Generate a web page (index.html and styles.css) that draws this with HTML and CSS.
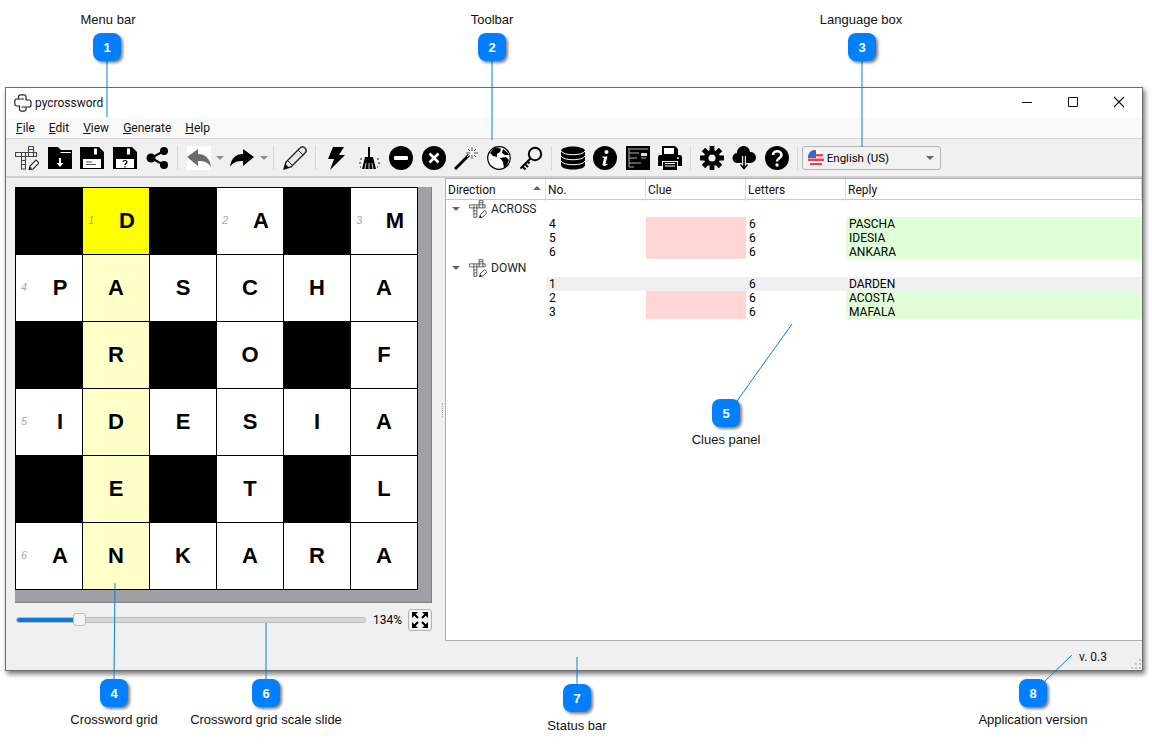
FILE: index.html
```html
<!DOCTYPE html>
<html lang="en">
<head>
    <meta charset="UTF-8">
    <meta name="viewport" content="width=device-width, initial-scale=1.0">
    <title>pycrossword</title>
    <link rel="stylesheet" href="styles.css">
</head>
<body>
    <svg width="0" height="0" class="defs">
        <symbol id="crossIcon" viewBox="1 0 24 24">
            <path d="M1.500 6.500h21v4h-21zM7.500 6.500v17M11.500 6.500v17M7.500 14.500h4M7.500 18.500h4M7.500 23h4M14.500 .5v10M19.500 .5v10M14.500 .5h5M14.500 3.500h5" fill="none" stroke="#444" stroke-width="1.100"/>
            <path d="M15 24l1-4 6-6 3 3-6 6z" fill="#fff" stroke="#222" stroke-width="1.100"/>
            <path d="M15 24l1-3 2 1z" fill="#000"/>
        </symbol>
    </svg>

    <div class="window">
        <div class="titlebar">
            <svg class="app-icon" width="18" height="18" viewBox="0 0 18 18"><path d="M6.500 .8h3.500a2 2 0 0 1 2 2V6h3a2 2 0 0 1 2 2v3a2 2 0 0 1-2 2h-3v2.200a2 2 0 0 1-2 2H7.500a2 2 0 0 1-2-2V12H2.800a2 2 0 0 1-2-2V7a2 2 0 0 1 2-2h1.700V2.800a2 2 0 0 1 2-2zM4.500 5H10M7.500 13H13" fill="none" stroke="#222" stroke-width="1.200"/></svg>
            <span class="app-name">pycrossword</span>
            <div class="win-btns">
                <svg width="46" height="30" viewBox="0 0 46 30"><path d="M18 14.500h10" stroke="#111"/></svg>
                <svg width="46" height="30" viewBox="0 0 46 30"><path d="M18.500 9.500h9v9h-9z" fill="none" stroke="#111"/></svg>
                <svg width="46" height="30" viewBox="0 0 46 30"><path d="M18 9l10 10M28 9L18 19" stroke="#111" stroke-width="1.100"/></svg>
            </div>
        </div>

        <div class="menubar">
            <span class="menu-item"><u>F</u>ile</span>
            <span class="menu-item"><u>E</u>dit</span>
            <span class="menu-item"><u>V</u>iew</span>
            <span class="menu-item"><u>G</u>enerate</span>
            <span class="menu-item"><u>H</u>elp</span>
        </div>

        <div class="toolbar">
            <span class="tool"><svg width="24" height="24"><use href="#crossIcon"/></svg></span>
            <span class="tool"><svg width="24" height="24" viewBox="0 0 24 24"><path d="M0 1h10l3 3h11v19H0z" fill="#000"/><path d="M12.500 6.500H23" stroke="#fff"/><path d="M11 12h2v5h2.500L12 21l-3.500-4H11z" fill="#fff"/></svg></span>
            <span class="tool"><svg width="24" height="24" viewBox="0 0 24 24"><path d="M0 1h19l5 5v17H0z" fill="#000"/><path d="M14 2.500h3v6h-3zM3 13h18v9H3z" fill="#fff"/><path d="M6 15.500h6v1H6zM6 18h10v1H6z" fill="#555"/></svg></span>
            <span class="tool"><svg width="24" height="24" viewBox="0 0 24 24"><path d="M0 1h19l5 5v17H0z" fill="#000"/><path d="M14 2.500h3v6h-3zM3 13h18v9H3z" fill="#fff"/><path d="M10 16c0-2 4-2 4 0 0 1.500-2 1.500-2 3M12 20v1.500" fill="none" stroke="#000" stroke-width="1.200"/></svg></span>
            <span class="tool"><svg width="24" height="24" viewBox="0 0 24 24"><path d="M19 5L6 12l13 7" fill="none" stroke="#000" stroke-width="2"/><circle cx="19" cy="5" r="4"/><circle cx="6" cy="12" r="4.500"/><circle cx="19" cy="19" r="4"/></svg></span>
            <span class="sep"></span>
            <span class="tool tool-off"><svg width="24" height="24" viewBox="0 0 24 24"><path d="M0 11L11 3v5c7 0 12 4 13 13-3-5-7-6-13-6v5z" fill="#6b6b6b"/></svg></span>
            <span class="drop"></span>
            <span class="tool"><svg width="24" height="24" viewBox="0 0 24 24"><path d="M24 11L13 3v5C6 8 1 12 0 21c3-5 7-6 13-6v5z" fill="#000"/></svg></span>
            <span class="drop"></span>
            <span class="sep"></span>
            <span class="tool"><svg width="24" height="24" viewBox="0 0 24 24"><path d="M1 23l2-7L17 2c2-2 4-1 5 0s2 3 0 5L8 21z" fill="#e8e8e8" stroke="#222" stroke-width="1.400"/><path d="M1 23l1.500-5 3.500 3.500z" fill="#000"/><path d="M15 4l5 5M5 15l4 4" stroke="#222"/></svg></span>
            <span class="sep"></span>
            <span class="tool"><svg width="24" height="24" viewBox="0 0 24 24"><path d="M9 1h11l-5 8h6L6 24l4-11H4z" fill="#000"/></svg></span>
            <span class="tool"><svg width="24" height="24" viewBox="0 0 24 24"><path d="M11 1h2v10h-2z" fill="#000"/><path d="M8 11h8l3 12H5z" fill="#000"/><path d="M9 17l-1 6M12 17v6M15 17l1 6" stroke="#fff" stroke-width=".8"/><path d="M3 13h2M2 17h2M3 21h1M20 13h2M21 17h2M20 21h1" stroke="#222"/></svg></span>
            <span class="tool"><svg width="24" height="24" viewBox="0 0 24 24"><circle cx="12" cy="12" r="12"/><rect x="5" y="10" width="14" height="4" rx="1" fill="#fff"/></svg></span>
            <span class="tool"><svg width="24" height="24" viewBox="0 0 24 24"><circle cx="12" cy="12" r="12"/><path d="M7.500 7.500l9 9M16.500 7.500l-9 9" stroke="#fff" stroke-width="2.600"/></svg></span>
            <span class="tool"><svg width="24" height="24" viewBox="0 0 24 24"><path d="M1 23L15 9" stroke="#000" stroke-width="3"/><path d="M13 11l2-2" stroke="#fff"/><path d="M18 1v4M18 9v4M12 7h4M20 7h4M14 3l2 2M20 9l2 2M22 3l-2 2" stroke="#555"/></svg></span>
            <span class="tool"><svg width="24" height="24" viewBox="0 0 24 24"><circle cx="12" cy="12" r="11.300" fill="#fff" stroke="#000" stroke-width="1.200"/><path d="M6 3c3-2 6-1 8 0l-1 3-3 2v3l-4-1-3-3zM13 12l6-1 3 3-2 5-3 3-1-6zM16 3l4 3 2 3-4 0-3-2z" fill="#000"/></svg></span>
            <span class="tool"><svg width="24" height="24" viewBox="0 0 24 24"><circle cx="16" cy="8" r="6.200" fill="none" stroke="#000" stroke-width="2"/><path d="M11.500 12.500L1.500 22.500M3.500 20.500l3 3M6 18l3 3M8.500 15.500l2 2" fill="none" stroke="#000" stroke-width="2"/></svg></span>
            <span class="sep"></span>
            <span class="tool"><svg width="24" height="24" viewBox="0 0 24 24"><path d="M0 5c0-6 24-6 24 0v14c0 6-24 6-24 0z" fill="#000"/><path d="M0 5c2 5 22 5 24 0M0 10c2 5 22 5 24 0M0 15c2 5 22 5 24 0" fill="none" stroke="#fff" stroke-width="1"/></svg></span>
            <span class="tool"><svg width="24" height="24" viewBox="0 0 24 24"><circle cx="12" cy="12" r="12"/><circle cx="13.500" cy="6" r="2" fill="#fff"/><path d="M9.500 10.500h5l-2 7c0 1 1 1 2.500 0-1 2.500-5 3.500-5.500 1l1.500-6.500-1.500-.5z" fill="#fff"/></svg></span>
            <span class="tool"><svg width="24" height="24" viewBox="0 0 24 24"><path d="M0 0h24v24H0z" fill="#000"/><path d="M2 3h20M3 3v18M3 7h8M3 12h6M3 17h12M3 21h5M15 12h5M11 7h2M9 12h2" stroke="#ddd" fill="none" stroke-width=".8"/><path d="M15 7h6v3h-6z" fill="#ddd"/></svg></span>
            <span class="tool"><svg width="24" height="24" viewBox="0 0 24 24"><path d="M4 0h13l3 3v6H4z" fill="#000"/><path d="M6 2h10v6H6z" fill="#fff"/><path d="M2 9h20a2 2 0 0 1 2 2v9h-4v-5H4v5H0v-9a2 2 0 0 1 2-2z" fill="#000"/><circle cx="20" cy="12" r="1" fill="#fff"/><path d="M5 16h14v8H5z" fill="#000"/><path d="M7 17h10v1H7zM7 19.500h10v1H7z" fill="#fff"/></svg></span>
            <span class="sep"></span>
            <span class="tool"><svg width="24" height="24" viewBox="0 0 24 24"><path d="M12 5v-5M12 24v-5M5 12H0M24 12h-5M7 7L3.500 3.500M20.500 20.500L17 17M17 7l3.500-3.500M3.500 20.500L7 17" stroke="#000" stroke-width="4.800"/><circle cx="12" cy="12" r="8"/><circle cx="12" cy="12" r="3.500" fill="#f0f0f0"/></svg></span>
            <span class="tool"><svg width="24" height="24" viewBox="0 0 24 24"><path d="M6 17a5 5 0 0 1-1-10 6.500 6.500 0 0 1 13-1 5.500 5.500 0 0 1 1 11z" fill="#000"/><path d="M12 10v12M8 18l4 4.500 4-4.500" fill="none" stroke="#f0f0f0" stroke-width="4"/><path d="M12 10v12M8.500 18.500l3.500 4 3.500-4" fill="none" stroke="#000" stroke-width="1.600"/></svg></span>
            <span class="tool"><svg width="24" height="24" viewBox="0 0 24 24"><circle cx="12" cy="12" r="12"/><path d="M8 9c0-5 8.500-5 8.500 0 0 3.500-4.500 3-4.500 6.500" fill="none" stroke="#fff" stroke-width="2.600"/><circle cx="12" cy="19" r="1.700" fill="#fff"/></svg></span>
            <span class="sep"></span>
            <div class="combo">
                <svg class="flag" width="16" height="16" viewBox="0 0 16 16">
                    <circle cx="8" cy="8" r="8" fill="#fff"/>
                    <path d="M1 4h14v2.500H1zM0 8.500h16V11H0zM2 13h12v2H2z" fill="#e8434f"/>
                    <path d="M0 8V6a7 7 0 0 1 8-6v8z" fill="#3f66c4"/>
                </svg>
                <span class="combo-text">English (US)</span>
                <span class="combo-arrow"></span>
            </div>
        </div>

        <div class="main">
            <div class="left-panel">
                <div class="grid-area">
                    <div class="grid">
                        <div class="cell black"></div>
                        <div class="cell active numbered"><span class="num">1</span>D</div>
                        <div class="cell black"></div>
                        <div class="cell numbered"><span class="num">2</span>A</div>
                        <div class="cell black"></div>
                        <div class="cell numbered"><span class="num">3</span>M</div>

                        <div class="cell numbered"><span class="num">4</span>P</div>
                        <div class="cell word">A</div>
                        <div class="cell">S</div>
                        <div class="cell">C</div>
                        <div class="cell">H</div>
                        <div class="cell">A</div>

                        <div class="cell black"></div>
                        <div class="cell word">R</div>
                        <div class="cell black"></div>
                        <div class="cell">O</div>
                        <div class="cell black"></div>
                        <div class="cell">F</div>

                        <div class="cell numbered"><span class="num">5</span>I</div>
                        <div class="cell word">D</div>
                        <div class="cell">E</div>
                        <div class="cell">S</div>
                        <div class="cell">I</div>
                        <div class="cell">A</div>

                        <div class="cell black"></div>
                        <div class="cell word">E</div>
                        <div class="cell black"></div>
                        <div class="cell">T</div>
                        <div class="cell black"></div>
                        <div class="cell">L</div>

                        <div class="cell numbered"><span class="num">6</span>A</div>
                        <div class="cell word">N</div>
                        <div class="cell">K</div>
                        <div class="cell">A</div>
                        <div class="cell">R</div>
                        <div class="cell">A</div>
                    </div>
                </div>
                <div class="scale-row">
                    <div class="slider">
                        <div class="slider-fill"></div>
                        <div class="slider-handle"></div>
                    </div>
                    <span class="scale-value">134%</span>
                    <span class="fit-btn">
                        <svg width="16" height="16" viewBox="0 0 16 16"><path d="M0 0h6L0 6zM16 0v6L10 0zM0 16v-6l6 6zM16 16h-6l6-6z" fill="#000"/><path d="M2 2l4 4M14 2l-4 4M2 14l4-4M14 14l-4-4" stroke="#000" stroke-width="2"/></svg>
                    </span>
                </div>
            </div>

            <div class="splitter"><span class="grip"></span></div>

            <div class="clues">
                <div class="clues-row clues-head">
                    <div class="head-cell head-sort">Direction<span class="sort-arrow"></span></div>
                    <div class="head-cell">No.</div>
                    <div class="head-cell">Clue</div>
                    <div class="head-cell">Letters</div>
                    <div class="head-cell">Reply</div>
                </div>

                <div class="group group-across">
                    <span class="twisty"></span>
                    <svg class="group-icon" width="18" height="18"><use href="#crossIcon"/></svg>
                    <span>ACROSS</span>
                </div>
                <div class="clues-row">
                    <div></div><div class="col-text">4</div><div class="bad"></div><div class="col-text">6</div><div class="col-text good">PASCHA</div>
                </div>
                <div class="clues-row">
                    <div></div><div class="col-text">5</div><div class="bad"></div><div class="col-text">6</div><div class="col-text good">IDESIA</div>
                </div>
                <div class="clues-row">
                    <div></div><div class="col-text">6</div><div class="bad"></div><div class="col-text">6</div><div class="col-text good">ANKARA</div>
                </div>

                <div class="group group-down">
                    <span class="twisty"></span>
                    <svg class="group-icon" width="18" height="18"><use href="#crossIcon"/></svg>
                    <span>DOWN</span>
                </div>
                <div class="clues-row">
                    <div></div><div class="col-text shade">1</div><div class="shade"></div><div class="col-text shade">6</div><div class="col-text shade">DARDEN</div>
                </div>
                <div class="clues-row">
                    <div></div><div class="col-text">2</div><div class="bad"></div><div class="col-text">6</div><div class="col-text good">ACOSTA</div>
                </div>
                <div class="clues-row">
                    <div></div><div class="col-text">3</div><div class="bad"></div><div class="col-text">6</div><div class="col-text good">MAFALA</div>
                </div>
            </div>
        </div>

        <div class="statusbar">
            <span class="version">v. 0.3</span>
            <svg class="size-grip" width="12" height="12" viewBox="0 0 12 12"><path d="M9 1h2v2H9zM5 5h2v2H5zM9 5h2v2H9zM1 9h2v2H1zM5 9h2v2H5zM9 9h2v2H9z" fill="#c4c4c4"/></svg>
        </div>
    </div>

    <!-- callouts over the screenshot -->
    <svg class="leaders" width="1152" height="750" viewBox="0 0 1152 750">
        <path d="M107 61V117M492 61V140M862 61V147M114 679L115 583M737 401L792 324M266 679V623M577 684V657M1045 681L1072 655" fill="none" stroke="#0b7de0" stroke-width="1"/>
    </svg>

    <span class="label l1">Menu bar</span>
    <span class="label l2">Toolbar</span>
    <span class="label l3">Language box</span>
    <span class="label l4">Crossword grid</span>
    <span class="label l5">Clues panel</span>
    <span class="label l6">Crossword grid scale slide</span>
    <span class="label l7">Status bar</span>
    <span class="label l8">Application version</span>

    <span class="badge b1">1</span>
    <span class="badge b2">2</span>
    <span class="badge b3">3</span>
    <span class="badge b4">4</span>
    <span class="badge b5">5</span>
    <span class="badge b6">6</span>
    <span class="badge b7">7</span>
    <span class="badge b8">8</span>
</body>
</html>
```

FILE: styles.css
```css
html, body {
    margin: 0;
    padding: 0;
}

body {
    position: relative;
    width: 1152px;
    height: 750px;
    overflow: hidden;
    background-color: #fff;
    font-family: Roboto, sans-serif;
    font-size: 12px;
    color: #000;
}

.defs {
    position: absolute;
}

.window {
    box-sizing: border-box;
    width: 1138px;
    height: 584px;
    margin: 87px 0 0 5px;
    border: 1px solid #6e6e6e;
    background-color: #f0f0f0;
    box-shadow: 2px 3px 5px rgba(0, 0, 0, 0.55);
    display: flex;
    flex-direction: column;
}

.titlebar {
    height: 30px;
    background-color: #fff;
    display: flex;
    align-items: center;
    padding-left: 8px;
}

.app-icon {
    margin-right: 3px;
}

.app-name {
    font-size: 12px;
    color: #111;
}

.win-btns {
    margin-left: auto;
    display: flex;
}

.menubar {
    height: 20px;
    background-color: #f9f9f9;
    display: flex;
    align-items: center;
    padding-left: 10px;
    border-bottom: 1px solid #dadada;
}

.menu-item {
    margin-right: 14px;
    color: #111;
}

.toolbar {
    height: 37px;
    display: flex;
    align-items: center;
    padding-left: 4.75px;
    border-bottom: 2px solid #d0d0d0;
}

.tool {
    width: 32.5px;
    height: 26px;
    flex: none;
    display: flex;
    align-items: center;
    justify-content: center;
}

.tool-off svg {
    background-color: #fff;
}

.sep {
    width: 1px;
    height: 24px;
    margin: 0 4px;
    flex: none;
    background-color: #d8d8d8;
}

.drop {
    width: 11px;
    flex: none;
    display: flex;
    justify-content: center;
}

.drop::before {
    content: "";
    border-left: 4px solid transparent;
    border-right: 4px solid transparent;
    border-top: 4px solid #8c8c8c;
}

.combo {
    box-sizing: border-box;
    width: 139px;
    height: 24px;
    padding-left: 5px;
    display: flex;
    align-items: center;
    border: 1px solid #b4b4b4;
    border-radius: 3px;
    background-color: #f2f2f2;
}

.flag {
    margin-right: 3px;
}

.combo-text {
    font-size: 11.5px;
}

.combo-arrow {
    margin-left: auto;
    margin-right: 6px;
    border-left: 4px solid transparent;
    border-right: 4px solid transparent;
    border-top: 4px solid #666;
}

.main {
    flex: 1;
    display: flex;
    min-height: 0;
}

.left-panel {
    width: 434px;
    flex: none;
    padding: 9px 0 0 9px;
    box-sizing: border-box;
}

.grid-area {
    box-sizing: border-box;
    width: 417px;
    height: 416px;
    background-color: #a0a0a4;
    border-right: 1px solid #808080;
    border-bottom: 1px solid #808080;
}

.grid {
    display: grid;
    grid-template-columns: repeat(6, 66px);
    grid-auto-rows: 66px;
    gap: 1px;
    width: 403px;
    box-sizing: border-box;
    padding: 1px;
    background-color: #000;
}

.cell {
    position: relative;
    display: flex;
    align-items: center;
    justify-content: center;
    background-color: #fff;
    font-family: "Liberation Sans", Arial, sans-serif;
    font-weight: bold;
    font-size: 22px;
    color: #000;
}

.cell.numbered {
    padding-left: 22px;
}

.cell.black {
    background-color: #000;
}

.cell.active {
    background-color: #ffff00;
}

.cell.word {
    background-color: #ffffc8;
}

.num {
    position: absolute;
    left: 5px;
    top: 26px;
    font-size: 11px;
    line-height: 12px;
    font-weight: normal;
    font-style: italic;
    color: #a8a8a8;
}

.scale-row {
    display: flex;
    align-items: center;
    height: 22px;
    margin-top: 6px;
}

.slider {
    position: relative;
    width: 348px;
    height: 4px;
    margin-left: 1px;
    border: 1px solid #bdbdbd;
    border-radius: 3px;
    background-color: #d6d6d6;
}

.slider-fill {
    width: 58px;
    height: 100%;
    border-radius: 3px 0 0 3px;
    background-color: #0a78d7;
}

.slider-handle {
    position: absolute;
    left: 56px;
    top: -5px;
    width: 11px;
    height: 11px;
    border: 1px solid #bdbdbd;
    border-radius: 3px;
    background-color: #f4f4f4;
}

.scale-value {
    margin-left: 7px;
    font-size: 12px;
    width: 35px;
}

.fit-btn {
    box-sizing: border-box;
    width: 24px;
    height: 22px;
    display: flex;
    align-items: center;
    justify-content: center;
    border: 1px solid #b4b4b4;
    border-radius: 3px;
}

.splitter {
    width: 5px;
    flex: none;
    display: flex;
    align-items: center;
    justify-content: center;
}

.grip {
    height: 14px;
    border-left: 1px dotted #aaa;
}

.clues {
    flex: 1;
    background-color: #fff;
    border: 1px solid #b0b0b0;
    border-right: none;
}

.clues-row {
    display: grid;
    grid-template-columns: 100px 100px 100px 100px 1fr;
    height: 14px;
    line-height: 14px;
}

.clues-head {
    height: 21px;
    line-height: 22px;
    border-bottom: 1px solid #c8c8c8;
    box-sizing: border-box;
}

.head-cell {
    position: relative;
    padding-left: 2px;
    border-right: 1px solid #dcdcdc;
    color: #111;
}

.sort-arrow {
    position: absolute;
    right: 4px;
    top: 7px;
    border-left: 4px solid transparent;
    border-right: 4px solid transparent;
    border-bottom: 4px solid #666;
}

.group {
    display: flex;
    align-items: center;
    padding-left: 6px;
    color: #222;
}

.group-across {
    height: 17px;
}

.group-down {
    height: 18px;
}

.twisty {
    width: 0;
    margin-right: 9px;
    border-left: 4px solid transparent;
    border-right: 4px solid transparent;
    border-top: 4px solid #666;
}

.group-icon {
    margin-right: 4px;
}

.col-text {
    padding-left: 3px;
}

.bad {
    background-color: #ffd6d6;
}

.good {
    background-color: #e0ffd8;
}

.shade {
    background-color: #f0f0f0;
}

.statusbar {
    flex: none;
    height: 29px;
    display: flex;
    align-items: flex-end;
    justify-content: flex-end;
    color: #111;
}

.version {
    margin-bottom: 6px;
    margin-right: 23px;
}

.leaders {
    position: absolute;
    left: 0;
    top: 0;
}

.label {
    position: absolute;
    transform: translateX(-50%);
    white-space: nowrap;
    font-family: "Liberation Sans", Arial, sans-serif;
    font-size: 13px;
    line-height: 14px;
    color: #111;
}

.l1 { left: 108px; top: 13px; }
.l2 { left: 492px; top: 13px; }
.l3 { left: 861px; top: 13px; }
.l4 { left: 114px; top: 713px; }
.l5 { left: 726px; top: 433px; }
.l6 { left: 266px; top: 713px; }
.l7 { left: 577px; top: 719px; }
.l8 { left: 1033px; top: 713px; }

.badge {
    position: absolute;
    width: 28px;
    height: 28px;
    border-radius: 8px;
    background-color: #0080ff;
    box-shadow: 2px 2px 3px rgba(0, 0, 0, 0.5);
    display: flex;
    align-items: center;
    justify-content: center;
    font-family: "Liberation Sans", Arial, sans-serif;
    font-size: 13px;
    font-weight: bold;
    color: #fff;
}

.b1 { left: 93px; top: 33px; }
.b2 { left: 478px; top: 33px; }
.b3 { left: 848px; top: 33px; }
.b4 { left: 100px; top: 679px; }
.b5 { left: 712px; top: 399px; }
.b6 { left: 252px; top: 679px; }
.b7 { left: 563px; top: 684px; }
.b8 { left: 1019px; top: 679px; }
```
